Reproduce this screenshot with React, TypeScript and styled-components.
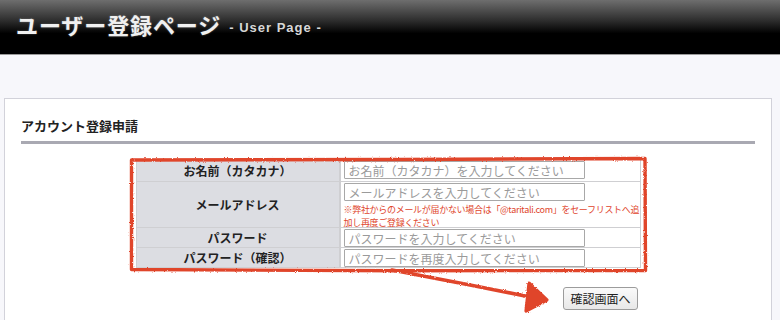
import React from "react";
import styled, { createGlobalStyle } from "styled-components";

const Global = createGlobalStyle`
  html, body { margin: 0; padding: 0; background: #f7f7fb; }
  body { font-family: "Noto Sans CJK JP", "Noto Sans", "Liberation Sans", sans-serif; }
`;

const Page = styled.div`
  position: relative;
  width: 780px;
  height: 320px;
  overflow: hidden;
  background: #f7f7fb;
`;

const Header = styled.header`
  height: 55px;
  background: linear-gradient(to bottom, #6e6e6e 0%, #2a2a2a 40%, #000 62%, #000 100%);
  border-bottom: 1px solid #9a9a9a;
  display: flex;
  align-items: center;
  padding: 0 0 6px 16px;
  box-sizing: border-box;
  gap: 8px;
`;

const Title = styled.h1`
  margin: 0;
  font-size: 22px;
  font-weight: 700;
  color: #f0f0f0;
  letter-spacing: 0.9px;
  text-shadow: 0 0 2px rgba(255, 255, 255, 0.35);
`;

const SubTitle = styled.span`
  font-family: "Liberation Sans", sans-serif;
  font-size: 13px;
  font-weight: 700;
  color: #d8d8d8;
  padding-top: 6px;
  letter-spacing: 1px;
`;

const Card = styled.section`
  margin: 43px 0 0 4px;
  width: 768px;
  height: 240px;
  box-sizing: border-box;
  background: #fff;
  border: 1px solid #d2d2da;
  padding: 16px 16px 0 16px;
`;

const CardTitle = styled.h2`
  margin: 0;
  font-size: 13px;
  font-weight: 700;
  color: #222;
  line-height: 22px;
  padding-bottom: 4px;
  border-bottom: 3px solid #a9a9b2;
`;

const FormArea = styled.div`
  width: 505px;
  margin: 15px auto 0;
`;

const FormGrid = styled.div`
  display: grid;
  grid-template-columns: 202px 1fr;
  grid-auto-rows: auto;
  gap: 1px 2px;
  background: #cfcfd2;
  border: 1px solid #cfcfd2;
`;

const Label = styled.div<{ $h: number }>`
  background: #dcdde2;
  height: ${(p) => p.$h}px;
  display: flex;
  align-items: center;
  justify-content: center;
  font-size: 12px;
  font-weight: 700;
  color: #222;
`;

const Field = styled.div<{ $h: number }>`
  background: #fff;
  height: ${(p) => p.$h}px;
  padding: 1px 0 0 3px;
  box-sizing: border-box;
  display: flex;
  flex-direction: column;
  justify-content: flex-start;
`;

const Input = styled.input`
  width: 241px;
  height: 18px;
  box-sizing: border-box;
  border: 1px solid #a8a8a8;
  border-radius: 1px;
  padding: 0 4px;
  font-family: inherit;
  font-size: 12px;
  color: #333;
  background: #fff;
  outline: none;
  &::placeholder { color: #9a9a9a; }
`;

const Note = styled.p`
  margin: 2px 0 0;
  font-size: 9px;
  line-height: 13px;
  color: #e0452c;
  white-space: nowrap;
  letter-spacing: -0.3px;
`;

const Actions = styled.div`
  display: flex;
  justify-content: flex-end;
  padding: 19px 3px 0 0;
`;

const Button = styled.button`
  height: 23px;
  padding: 0 6px;
  font-family: inherit;
  font-size: 12px;
  color: #222;
  background: linear-gradient(#fafafa, #e8e8e8);
  border: 1px solid #9c9c9c;
  border-radius: 3px;
`;

const Overlay = styled.svg`
  position: absolute;
  left: 0;
  top: 0;
  pointer-events: none;
`;

const rows = [
  { label: "お名前（カタカナ）", ph: "お名前（カタカナ）を入力してください", h: 21 },
  { label: "メールアドレス", ph: "メールアドレスを入力してください", h: 45, note: true },
  { label: "パスワード", ph: "パスワードを入力してください", h: 19 },
  { label: "パスワード（確認）", ph: "パスワードを再度入力してください", h: 19 },
];

export default function App() {
  return (
    <Page>
      <Global />
      <Header>
        <Title>ユーザー登録ページ</Title>
        <SubTitle>- User Page -</SubTitle>
      </Header>
      <Card>
        <CardTitle>アカウント登録申請</CardTitle>
        <FormArea>
          <FormGrid>
            {rows.map((r) => (
              <React.Fragment key={r.label}>
                <Label $h={r.h}>{r.label}</Label>
                <Field $h={r.h}>
                  <Input placeholder={r.ph} />
                  {r.note && (
                    <Note>
                      ※弊社からのメールが届かない場合は「@taritali.com」をセーフリストへ追
                      <br />
                      加し再度ご登録ください
                    </Note>
                  )}
                </Field>
              </React.Fragment>
            ))}
          </FormGrid>
          <Actions>
            <Button>確認画面へ</Button>
          </Actions>
        </FormArea>
      </Card>
      <Overlay width="780" height="320" viewBox="0 0 780 320">
        <defs>
          <filter id="rough" x="-5%" y="-5%" width="110%" height="110%">
            <feTurbulence type="fractalNoise" baseFrequency="0.9" numOctaves="2" seed="3" result="n" />
            <feDisplacementMap in="SourceGraphic" in2="n" scale="2.5" xChannelSelector="R" yChannelSelector="G" />
          </filter>
        </defs>
        <g filter="url(#rough)" stroke="#e0452c" fill="none" strokeLinecap="round" strokeLinejoin="round">
          <path d="M131.5 160 L400 159.5 L645 158.5 L645.5 270.5 L400 270.8 L131.5 269.5 Z" strokeWidth="3.4" />
          <path d="M392 270 L470 285 L545 300" strokeWidth="3.6" />
          <path d="M529 283 L547 300 L526 311 Z" strokeWidth="3.2" fill="#e0452c" />
        </g>
      </Overlay>
    </Page>
  );
}
